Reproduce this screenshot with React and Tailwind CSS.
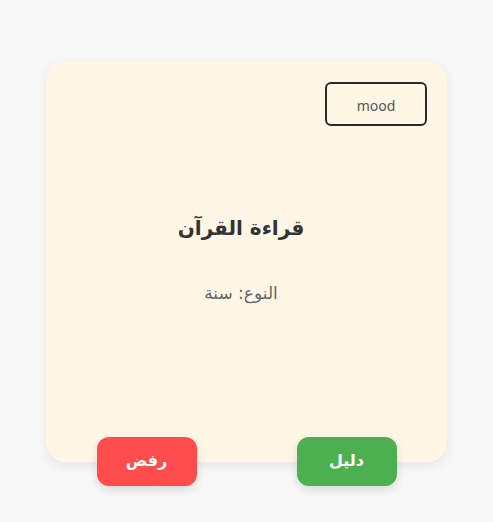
export default function App() {
  return (
    <div className="min-h-screen w-full bg-[#f8f8f8] flex items-center justify-center" style={{ fontFamily: '"DejaVu Sans", "Noto Sans", sans-serif' }} dir="rtl">
      <div className="relative w-[401px] h-[401px] bg-[#fff6e5] rounded-[20px] shadow-[0_4px_12px_rgba(0,0,0,0.08)] flex flex-col items-center pr-[11px]">
        <button className="absolute top-[21px] right-[20px] w-[102px] h-[44px] border-2 border-[#2b2b2b] rounded-[6px] bg-transparent text-[14px] text-[#555] flex items-center justify-center pt-[3px]" style={{ fontFamily: '"Noto Sans", sans-serif' }}>
          mood
        </button>
        <div className="mt-[152px] text-[20px] font-bold text-[#333]">قراءة القرآن</div>
        <div className="mt-[38px] text-[17px] text-[#666]">النوع: سنة</div>
        <div className="absolute bottom-[-24px] left-0 right-0 flex justify-center gap-[100px]">
          <button className="w-[100px] h-[49px] rounded-[12px] bg-[#4caf50] text-white font-bold text-[16px] shadow-[0_4px_10px_rgba(0,0,0,0.12)]">دليل</button>
          <button className="w-[100px] h-[49px] rounded-[12px] bg-[#ff4c4c] text-white font-bold text-[16px] shadow-[0_4px_10px_rgba(0,0,0,0.12)]">رفض</button>
        </div>
      </div>
    </div>
  );
}
